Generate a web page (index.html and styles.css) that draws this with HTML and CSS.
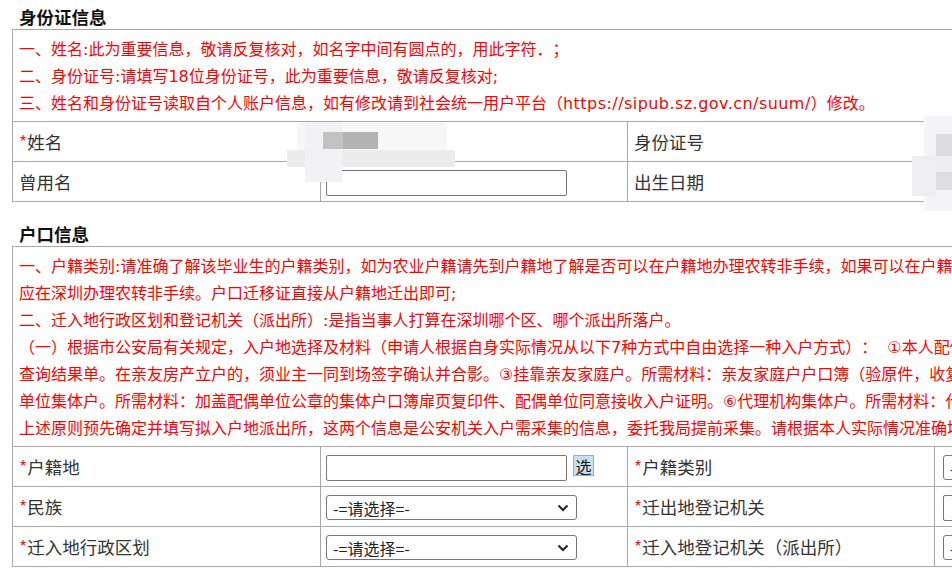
FILE: index.html
```html
<!DOCTYPE html>
<html lang="zh-CN">
<head>
<meta charset="utf-8">
<title>信息填写</title>
<link rel="stylesheet" href="styles.css">
</head>
<body>
<div class="page">
  <h2 class="sec-title first">身份证信息</h2>
  <div class="table-wrap">
    <table class="form-table">
      <colgroup><col class="c1"><col class="c2"><col class="c3"><col class="c4"></colgroup>
      <tr>
        <td colspan="4" class="notice">一、姓名:此为重要信息，敬请反复核对，如名字中间有圆点的，用此字符．；<br>二、身份证号:请填写18位身份证号，此为重要信息，敬请反复核对;<br>三、姓名和身份证号读取自个人账户信息，如有修改请到社会统一用户平台（<span class="url">https://sipub.sz.gov.cn/suum/</span>）修改。</td>
      </tr>
      <tr>
        <td class="label"><span class="req">*</span>姓名</td>
        <td class="value"></td>
        <td class="label">身份证号</td>
        <td class="value"></td>
      </tr>
      <tr>
        <td class="label">曾用名</td>
        <td class="value"><input type="text" class="txt"></td>
        <td class="label">出生日期</td>
        <td class="value"></td>
      </tr>
    </table>
    <div class="mask mask-name">
      <div class="m m1"></div>
      <div class="m m2"></div>
      <div class="m m3"></div>
      <div class="m m4"></div>
      <div class="m m5"></div>
    </div>
    <div class="mask mask-id">
      <div class="m r1"></div>
      <div class="m r2"></div>
      <div class="m r3"></div>
      <div class="m r4"></div>
      <div class="m r5"></div>
    </div>
  </div>

  <h2 class="sec-title second">户口信息</h2>
  <div class="table-wrap">
    <table class="form-table">
      <colgroup><col class="c1"><col class="c2"><col class="c3"><col class="c4"></colgroup>
      <tr>
        <td colspan="4" class="notice">一、户籍类别:请准确了解该毕业生的户籍类别，如为农业户籍请先到户籍地了解是否可以在户籍地办理农转非手续，如果可以在户籍地办理的，则在户籍地办理；如不能，<br>应在深圳办理农转非手续。户口迁移证直接从户籍地迁出即可;<br>二、迁入地行政区划和登记机关（派出所）:是指当事人打算在深圳哪个区、哪个派出所落户。<br>（一）根据市公安局有关规定，入户地选择及材料（申请人根据自身实际情况从以下7种方式中自由选择一种入户方式）：&nbsp;&nbsp;①本人配偶或直系亲属房产立户。所需材料：房产证明<br>查询结果单。在亲友房产立户的，须业主一同到场签字确认并合影。③挂靠亲友家庭户。所需材料：亲友家庭户户口簿（验原件，收复印件）。④配偶<br>单位集体户。所需材料：加盖配偶单位公章的集体户口簿扉页复印件、配偶单位同意接收入户证明。⑥代理机构集体户。所需材料：代理机构同意接收证明。<br>上述原则预先确定并填写拟入户地派出所，这两个信息是公安机关入户需采集的信息，委托我局提前采集。请根据本人实际情况准确填写。</td>
      </tr>
      <tr>
        <td class="label"><span class="req">*</span>户籍地</td>
        <td class="value"><input type="text" class="txt"><button type="button" class="pick">选</button></td>
        <td class="label"><span class="req">*</span>户籍类别</td>
        <td class="value v4"><span class="sel-wrap"><select class="sel"><option>-=请选择=-</option></select><svg class="chev" width="12" height="8" viewBox="0 0 12 8"><path d="M1.5 1.5 L6 6 L10.5 1.5" fill="none" stroke="#222" stroke-width="2"/></svg></span></td>
      </tr>
      <tr>
        <td class="label"><span class="req">*</span>民族</td>
        <td class="value"><span class="sel-wrap"><select class="sel"><option>-=请选择=-</option></select><svg class="chev" width="12" height="8" viewBox="0 0 12 8"><path d="M1.5 1.5 L6 6 L10.5 1.5" fill="none" stroke="#222" stroke-width="2"/></svg></span></td>
        <td class="label"><span class="req">*</span>迁出地登记机关</td>
        <td class="value v4"><input type="text" class="txt"></td>
      </tr>
      <tr>
        <td class="label"><span class="req">*</span>迁入地行政区划</td>
        <td class="value"><span class="sel-wrap"><select class="sel"><option>-=请选择=-</option></select><svg class="chev" width="12" height="8" viewBox="0 0 12 8"><path d="M1.5 1.5 L6 6 L10.5 1.5" fill="none" stroke="#222" stroke-width="2"/></svg></span></td>
        <td class="label"><span class="req">*</span>迁入地登记机关（派出所）</td>
        <td class="value v4"><span class="sel-wrap"><select class="sel"><option>-=请选择=-</option></select><svg class="chev" width="12" height="8" viewBox="0 0 12 8"><path d="M1.5 1.5 L6 6 L10.5 1.5" fill="none" stroke="#222" stroke-width="2"/></svg></span></td>
      </tr>
    </table>
  </div>
</div>
</body>
</html>
```

FILE: styles.css
```css
html, body {
  margin: 0;
  padding: 0;
  overflow: hidden;
  background: #fff;
}

body {
  font-family: "Noto Sans CJK SC", "Microsoft YaHei", sans-serif;
  color: #333;
  width: 952px;
  height: 575px;
  text-spacing-trim: space-all;
}

.page {
  padding: 4px 0 0 12px;
}

.sec-title {
  margin: 0 0 0 7px;
  font-size: 17.5px;
  line-height: 25px;
  height: 25px;
  font-weight: bold;
  color: #111;
}

.sec-title.second {
  margin-top: 19px;
}

.table-wrap {
  position: relative;
  width: 1222px;
}

.form-table {
  border-collapse: collapse;
  table-layout: fixed;
  width: 1222px;
}

.form-table td {
  border: 1px solid #a6a8b0;
  padding: 0 6px;
  height: 39px;
  vertical-align: middle;
  font-size: 17.5px;
  white-space: nowrap;
  overflow: hidden;
}

.form-table td.notice {
  height: auto;
  padding: 6px 6px 4px;
  font-family: "DejaVu Sans", "Noto Sans CJK SC", sans-serif;
  font-size: 16px;
  line-height: 27px;
  color: #ff0000;
  text-spacing-trim: space-all;
}

.url {
  font-family: "DejaVu Sans", sans-serif;
  letter-spacing: 0.45px;
}

.form-table td.value {
  padding: 0 4px;
}

.form-table td.v4 {
  padding: 0 7px;
}

.c1 { width: 308px; }
.c2 { width: 307px; }
.c3 { width: 307px; }
.c4 { width: 300px; }

.req {
  color: #ff2020;
}

.txt {
  box-sizing: border-box;
  width: 241px;
  height: 26px;
  margin: 0 0 0 1px;
  padding: 0 4px;
  border: 1px solid #767676;
  border-radius: 2px;
  vertical-align: middle;
  font-family: inherit;
  font-size: 16px;
}

.pick {
  box-sizing: border-box;
  width: 21px;
  height: 21px;
  margin: 0 0 0 6px;
  padding: 0;
  border: 1px solid #8fb0c8;
  background: #c9e0ee;
  color: #111;
  font-family: "Noto Sans CJK SC", sans-serif;
  font-size: 16px;
  line-height: 18px;
  vertical-align: middle;
  position: relative;
  top: -2px;
}

.sel-wrap {
  position: relative;
  display: inline-block;
  vertical-align: middle;
  margin-left: 1px;
}

.sel {
  display: block;
  box-sizing: border-box;
  width: 251px;
  height: 25px;
  margin: 0;
  padding: 0 24px 0 6px;
  border: 1px solid #767676;
  border-radius: 3px;
  background: #fff;
  color: #222;
  font-family: inherit;
  font-size: 16px;
  -webkit-appearance: none;
  appearance: none;
}

.chev {
  position: absolute;
  right: 8px;
  top: 9px;
  pointer-events: none;
}

/* mosaic masks over private values */
.mask {
  position: absolute;
  pointer-events: none;
}

.m {
  position: absolute;
}

.mask-name {
  left: 275px;
  top: 93px;
  width: 170px;
  height: 70px;
}

.mask-name .m1 { left: 10px; top: 0; width: 150px; height: 30px; background: #f7f7f8; border-radius: 8px 8px 0 0; }
.mask-name .m2 { left: 0; top: 28px; width: 168px; height: 17px; background: #ececee; }
.mask-name .m3 { left: 18px; top: 0; width: 37px; height: 60px; background: #f2f2f4; }
.mask-name .m4 { left: 36px; top: 10px; width: 20px; height: 17px; background: #c2c2c2; }
.mask-name .m5 { left: 56px; top: 10px; width: 35px; height: 17px; background: #b3b3b3; }

.mask-id {
  left: 900px;
  top: 87px;
  width: 52px;
  height: 95px;
}

.mask-id .r1 { left: 12px; top: 0; width: 40px; height: 95px; background: #f4f4f6; }
.mask-id .r2 { left: 24px; top: 18px; width: 28px; height: 22px; background: #dcdcde; }
.mask-id .r3 { left: 24px; top: 40px; width: 28px; height: 16px; background: #eeeef0; }
.mask-id .r4 { left: 24px; top: 56px; width: 28px; height: 18px; background: #dedee0; }
.mask-id .r5 { left: 0; top: 40px; width: 24px; height: 40px; background: #efeff1; }
```
